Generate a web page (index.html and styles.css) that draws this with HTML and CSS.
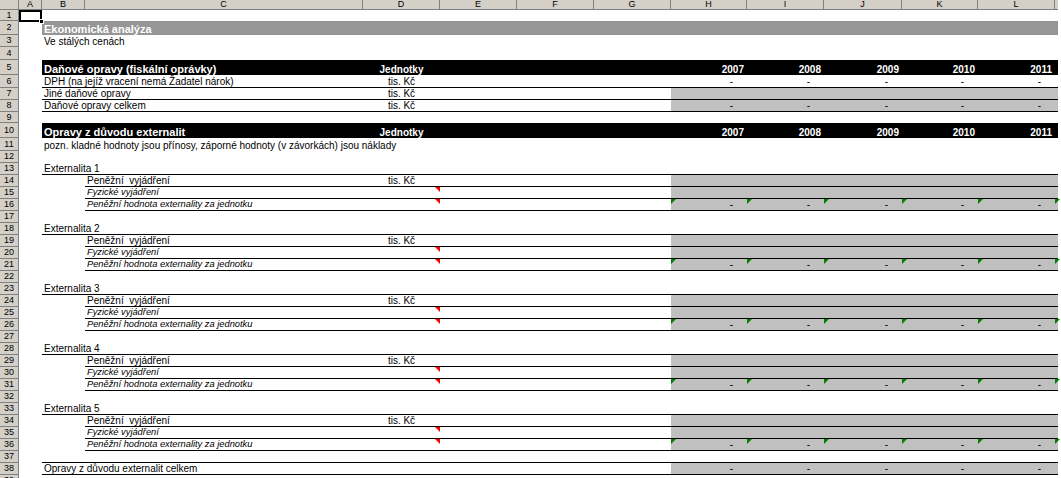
FILE: index.html
```html
<!DOCTYPE html>
<html lang="cs">
<head>
<meta charset="utf-8">
<title>Ekonomická analýza</title>
<link rel="stylesheet" href="styles.css">
</head>
<body>
<div class="sheet">
  <div class="hdr">
    <div class="hc rh corner"></div>
    <div class="hc ca selh">A</div>
    <div class="hc cb">B</div>
    <div class="hc cc">C</div>
    <div class="hc cd">D</div>
    <div class="hc ce">E</div>
    <div class="hc cf">F</div>
    <div class="hc cg">G</div>
    <div class="hc ch">H</div>
    <div class="hc ci">I</div>
    <div class="hc cj">J</div>
    <div class="hc ck">K</div>
    <div class="hc cl">L</div>
    <div class="hc cm"></div>
  </div>

  <div class="row h11"><div class="rh selh">1</div></div>

  <div class="row h14"><div class="rh">2</div><div class="cell ca"></div>
    <div class="band grey"><div class="cell cb title">Ekonomická analýza</div></div>
  </div>

  <div class="row h12"><div class="rh">3</div><div class="cell ca"></div><div class="cell cb txt">Ve stálých cenách</div></div>
  <div class="row h13"><div class="rh">4</div></div>

  <div class="row h15"><div class="rh">5</div><div class="cell ca"></div>
    <div class="band black">
      <div class="cell cb title">Daňové opravy (fiskální oprávky)</div><div class="cell cc"></div>
      <div class="cell cd ctr bold">Jednotky</div><div class="cell ce"></div><div class="cell cf"></div><div class="cell cg"></div>
      <div class="cell ch yr">2007</div><div class="cell ci yr">2008</div><div class="cell cj yr">2009</div><div class="cell ck yr">2010</div><div class="cell cl yr">2011</div>
    </div>
  </div>

  <div class="row h13"><div class="rh">6</div><div class="cell ca"></div>
    <div class="grp">
      <div class="cell cb txt">DPH (na jejíž vracení nemá Žadatel nárok)</div><div class="cell cc"></div>
      <div class="cell cd ctr">tis. Kč</div><div class="cell ce"></div><div class="cell cf"></div><div class="cell cg"></div>
      <div class="vals"><div class="cell ch num">-</div><div class="cell ci num">-</div><div class="cell cj num">-</div><div class="cell ck num">-</div><div class="cell cl num">-</div></div>
    </div>
  </div>

  <div class="row h12"><div class="rh">7</div><div class="cell ca"></div>
    <div class="grp">
      <div class="cell cb txt">Jiné daňové opravy</div><div class="cell cc"></div>
      <div class="cell cd ctr">tis. Kč</div><div class="cell ce"></div><div class="cell cf"></div><div class="cell cg"></div>
      <div class="vals shade"></div>
    </div>
  </div>

  <div class="row h12"><div class="rh">8</div><div class="cell ca"></div>
    <div class="grp">
      <div class="cell cb txt">Daňové opravy celkem</div><div class="cell cc"></div>
      <div class="cell cd ctr">tis. Kč</div><div class="cell ce"></div><div class="cell cf"></div><div class="cell cg"></div>
      <div class="vals shade"><div class="cell ch num">-</div><div class="cell ci num">-</div><div class="cell cj num">-</div><div class="cell ck num">-</div><div class="cell cl num">-</div></div>
    </div>
  </div>

  <div class="row h11"><div class="rh">9</div></div>

  <div class="row h15"><div class="rh">10</div><div class="cell ca"></div>
    <div class="band black">
      <div class="cell cb title">Opravy z důvodu externalit</div><div class="cell cc"></div>
      <div class="cell cd ctr bold">Jednotky</div><div class="cell ce"></div><div class="cell cf"></div><div class="cell cg"></div>
      <div class="cell ch yr">2007</div><div class="cell ci yr">2008</div><div class="cell cj yr">2009</div><div class="cell ck yr">2010</div><div class="cell cl yr">2011</div>
    </div>
  </div>

  <div class="row h13"><div class="rh">11</div><div class="cell ca"></div><div class="cell cb txt">pozn. kladné hodnoty jsou přínosy, záporné hodnoty (v závorkách) jsou náklady</div></div>
  <div class="row"><div class="rh">12</div></div>

  <!-- Externalita 1 -->
  <div class="row"><div class="rh">13</div><div class="cell ca"></div>
    <div class="grp"><div class="cell cb txt">Externalita 1</div></div>
  </div>
  <div class="row"><div class="rh">14</div><div class="cell ca"></div><div class="cell cb"></div>
    <div class="grp"><div class="cell cc txt">Peněžní&nbsp; vyjádření</div><div class="cell cd ctr">tis. Kč</div><div class="cell ce"></div><div class="cell cf"></div><div class="cell cg"></div><div class="vals shade"></div></div>
  </div>
  <div class="row"><div class="rh">15</div><div class="cell ca"></div><div class="cell cb"></div>
    <div class="grp"><div class="cell cc txt it">Fyzické vyjádření</div><div class="cell cd note"></div><div class="cell ce"></div><div class="cell cf"></div><div class="cell cg"></div><div class="vals shade"></div></div>
  </div>
  <div class="row"><div class="rh">16</div><div class="cell ca"></div><div class="cell cb"></div>
    <div class="grp"><div class="cell cc txt it">Peněžní hodnota externality za jednotku</div><div class="cell cd note"></div><div class="cell ce"></div><div class="cell cf"></div><div class="cell cg"></div>
      <div class="vals shade"><div class="cell ch num err">-</div><div class="cell ci num err">-</div><div class="cell cj num err">-</div><div class="cell ck num err">-</div><div class="cell cl num err">-</div><div class="cell cm err"></div></div>
    </div>
  </div>
  <div class="row"><div class="rh">17</div></div>

  <!-- Externalita 2 -->
  <div class="row"><div class="rh">18</div><div class="cell ca"></div>
    <div class="grp"><div class="cell cb txt">Externalita 2</div></div>
  </div>
  <div class="row"><div class="rh">19</div><div class="cell ca"></div><div class="cell cb"></div>
    <div class="grp"><div class="cell cc txt">Peněžní&nbsp; vyjádření</div><div class="cell cd ctr">tis. Kč</div><div class="cell ce"></div><div class="cell cf"></div><div class="cell cg"></div><div class="vals shade"></div></div>
  </div>
  <div class="row"><div class="rh">20</div><div class="cell ca"></div><div class="cell cb"></div>
    <div class="grp"><div class="cell cc txt it">Fyzické vyjádření</div><div class="cell cd note"></div><div class="cell ce"></div><div class="cell cf"></div><div class="cell cg"></div><div class="vals shade"></div></div>
  </div>
  <div class="row"><div class="rh">21</div><div class="cell ca"></div><div class="cell cb"></div>
    <div class="grp"><div class="cell cc txt it">Peněžní hodnota externality za jednotku</div><div class="cell cd note"></div><div class="cell ce"></div><div class="cell cf"></div><div class="cell cg"></div>
      <div class="vals shade"><div class="cell ch num err">-</div><div class="cell ci num err">-</div><div class="cell cj num err">-</div><div class="cell ck num err">-</div><div class="cell cl num err">-</div><div class="cell cm err"></div></div>
    </div>
  </div>
  <div class="row"><div class="rh">22</div></div>

  <!-- Externalita 3 -->
  <div class="row"><div class="rh">23</div><div class="cell ca"></div>
    <div class="grp"><div class="cell cb txt">Externalita 3</div></div>
  </div>
  <div class="row"><div class="rh">24</div><div class="cell ca"></div><div class="cell cb"></div>
    <div class="grp"><div class="cell cc txt">Peněžní&nbsp; vyjádření</div><div class="cell cd ctr">tis. Kč</div><div class="cell ce"></div><div class="cell cf"></div><div class="cell cg"></div><div class="vals shade"></div></div>
  </div>
  <div class="row"><div class="rh">25</div><div class="cell ca"></div><div class="cell cb"></div>
    <div class="grp"><div class="cell cc txt it">Fyzické vyjádření</div><div class="cell cd note"></div><div class="cell ce"></div><div class="cell cf"></div><div class="cell cg"></div><div class="vals shade"></div></div>
  </div>
  <div class="row"><div class="rh">26</div><div class="cell ca"></div><div class="cell cb"></div>
    <div class="grp"><div class="cell cc txt it">Peněžní hodnota externality za jednotku</div><div class="cell cd note"></div><div class="cell ce"></div><div class="cell cf"></div><div class="cell cg"></div>
      <div class="vals shade"><div class="cell ch num err">-</div><div class="cell ci num err">-</div><div class="cell cj num err">-</div><div class="cell ck num err">-</div><div class="cell cl num err">-</div><div class="cell cm err"></div></div>
    </div>
  </div>
  <div class="row"><div class="rh">27</div></div>

  <!-- Externalita 4 -->
  <div class="row"><div class="rh">28</div><div class="cell ca"></div>
    <div class="grp"><div class="cell cb txt">Externalita 4</div></div>
  </div>
  <div class="row"><div class="rh">29</div><div class="cell ca"></div><div class="cell cb"></div>
    <div class="grp"><div class="cell cc txt">Peněžní&nbsp; vyjádření</div><div class="cell cd ctr">tis. Kč</div><div class="cell ce"></div><div class="cell cf"></div><div class="cell cg"></div><div class="vals shade"></div></div>
  </div>
  <div class="row"><div class="rh">30</div><div class="cell ca"></div><div class="cell cb"></div>
    <div class="grp"><div class="cell cc txt it">Fyzické vyjádření</div><div class="cell cd note"></div><div class="cell ce"></div><div class="cell cf"></div><div class="cell cg"></div><div class="vals shade"></div></div>
  </div>
  <div class="row"><div class="rh">31</div><div class="cell ca"></div><div class="cell cb"></div>
    <div class="grp"><div class="cell cc txt it">Peněžní hodnota externality za jednotku</div><div class="cell cd note"></div><div class="cell ce"></div><div class="cell cf"></div><div class="cell cg"></div>
      <div class="vals shade"><div class="cell ch num err">-</div><div class="cell ci num err">-</div><div class="cell cj num err">-</div><div class="cell ck num err">-</div><div class="cell cl num err">-</div><div class="cell cm err"></div></div>
    </div>
  </div>
  <div class="row"><div class="rh">32</div></div>

  <!-- Externalita 5 -->
  <div class="row"><div class="rh">33</div><div class="cell ca"></div>
    <div class="grp"><div class="cell cb txt">Externalita 5</div></div>
  </div>
  <div class="row"><div class="rh">34</div><div class="cell ca"></div><div class="cell cb"></div>
    <div class="grp"><div class="cell cc txt">Peněžní&nbsp; vyjádření</div><div class="cell cd ctr">tis. Kč</div><div class="cell ce"></div><div class="cell cf"></div><div class="cell cg"></div><div class="vals shade"></div></div>
  </div>
  <div class="row"><div class="rh">35</div><div class="cell ca"></div><div class="cell cb"></div>
    <div class="grp"><div class="cell cc txt it">Fyzické vyjádření</div><div class="cell cd note"></div><div class="cell ce"></div><div class="cell cf"></div><div class="cell cg"></div><div class="vals shade"></div></div>
  </div>
  <div class="row"><div class="rh">36</div><div class="cell ca"></div><div class="cell cb"></div>
    <div class="grp"><div class="cell cc txt it">Peněžní hodnota externality za jednotku</div><div class="cell cd note"></div><div class="cell ce"></div><div class="cell cf"></div><div class="cell cg"></div>
      <div class="vals shade"><div class="cell ch num err">-</div><div class="cell ci num err">-</div><div class="cell cj num err">-</div><div class="cell ck num err">-</div><div class="cell cl num err">-</div><div class="cell cm err"></div></div>
    </div>
  </div>

  <div class="row"><div class="rh">37</div><div class="cell ca"></div><div class="grp"></div></div>
  <div class="row"><div class="rh">38</div><div class="cell ca"></div>
    <div class="grp">
      <div class="cell cb txt">Opravy z důvodu externalit celkem</div><div class="cell cc"></div>
      <div class="cell cd"></div><div class="cell ce"></div><div class="cell cf"></div><div class="cell cg"></div>
      <div class="vals shade"><div class="cell ch num">-</div><div class="cell ci num">-</div><div class="cell cj num">-</div><div class="cell ck num">-</div><div class="cell cl num">-</div></div>
    </div>
  </div>
  <div class="row"><div class="rh">39</div></div>

  <div class="sel"><span class="handle"></span></div>
</div>
</body>
</html>
```

FILE: styles.css
```css
html, body {
  margin: 0;
  padding: 0;
  background: #fff;
}
body {
  font-family: "Liberation Sans", Arial, sans-serif;
  font-size: 10px;
  color: #000;
  overflow: hidden;
  height: 478px;
}
.sheet {
  position: relative;
  width: 1058px;
}

/* column widths */
.rh { width: 19px; }
.ca { width: 23px; }
.cb { width: 43px; }
.cc { width: 278px; }
.cd, .ce, .cf, .cg, .ci, .cl { width: 77px; }
.ch, .ck { width: 76px; }
.cj { width: 78px; }
.cm { width: 3px; }

/* column header */
.hdr {
  display: flex;
  height: 10px;
}
.hc {
  flex: none;
  box-sizing: border-box;
  height: 10px;
  background: #d4d0c8;
  border-right: 1px solid #808080;
  border-bottom: 1px solid #808080;
  font-size: 9px;
  line-height: 9px;
  text-align: center;
  overflow: hidden;
}
.hc.cm { border-right: 0; }

/* rows */
.row {
  display: flex;
  height: 12px;
}
.row.h11 { height: 11px; }
.row.h12 { height: 12px; }
.row.h13 { height: 13px; }
.row.h14 { height: 14px; }
.row.h15 { height: 15px; }

.row > .rh {
  flex: none;
  box-sizing: border-box;
  background: #d4d0c8;
  border-right: 1px solid #808080;
  border-bottom: 1px solid #808080;
  font-size: 9px;
  display: flex;
  align-items: center;
  justify-content: center;
  line-height: 9px;
}

.cell {
  flex: none;
  box-sizing: border-box;
  display: flex;
  align-items: flex-end;
  line-height: 11px;
  white-space: nowrap;
}
.txt { padding-left: 2px; }
.it {
  font-style: italic;
  font-size: 9.3px;
}
.ctr { justify-content: center; }
.bold { font-weight: bold; }

/* filled bands */
.band {
  flex: 1;
  display: flex;
  color: #fff;
}
.band.grey { background: #969696; }
.band.black { background: #000; }
.title {
  font-weight: bold;
  font-size: 11px;
  padding-left: 2px;
}
.yr {
  justify-content: flex-end;
  padding-right: 3px;
  font-weight: bold;
}

/* bordered groups */
.grp {
  flex: 1;
  display: flex;
  box-sizing: border-box;
  border-bottom: 1px solid #000;
}
.vals {
  flex: 1;
  display: flex;
}
.shade { background: #c0c0c0; }
.num {
  justify-content: flex-end;
  padding-right: 14px;
}

/* indicators */
.note, .err { position: relative; }
.note::after {
  content: "";
  position: absolute;
  right: 0;
  top: 0;
  border-top: 5px solid #f00;
  border-left: 5px solid transparent;
}
.err::before {
  content: "";
  position: absolute;
  left: 0;
  top: 0;
  border-top: 5px solid #008000;
  border-right: 5px solid transparent;
}

/* active cell */
.sel {
  position: absolute;
  left: 19px;
  top: 10px;
  width: 19px;
  height: 8px;
  border: 2px solid #000;
}
.handle {
  position: absolute;
  right: -4px;
  bottom: -4px;
  width: 3px;
  height: 3px;
  background: #000;
  border: 1px solid #fff;
}
```
